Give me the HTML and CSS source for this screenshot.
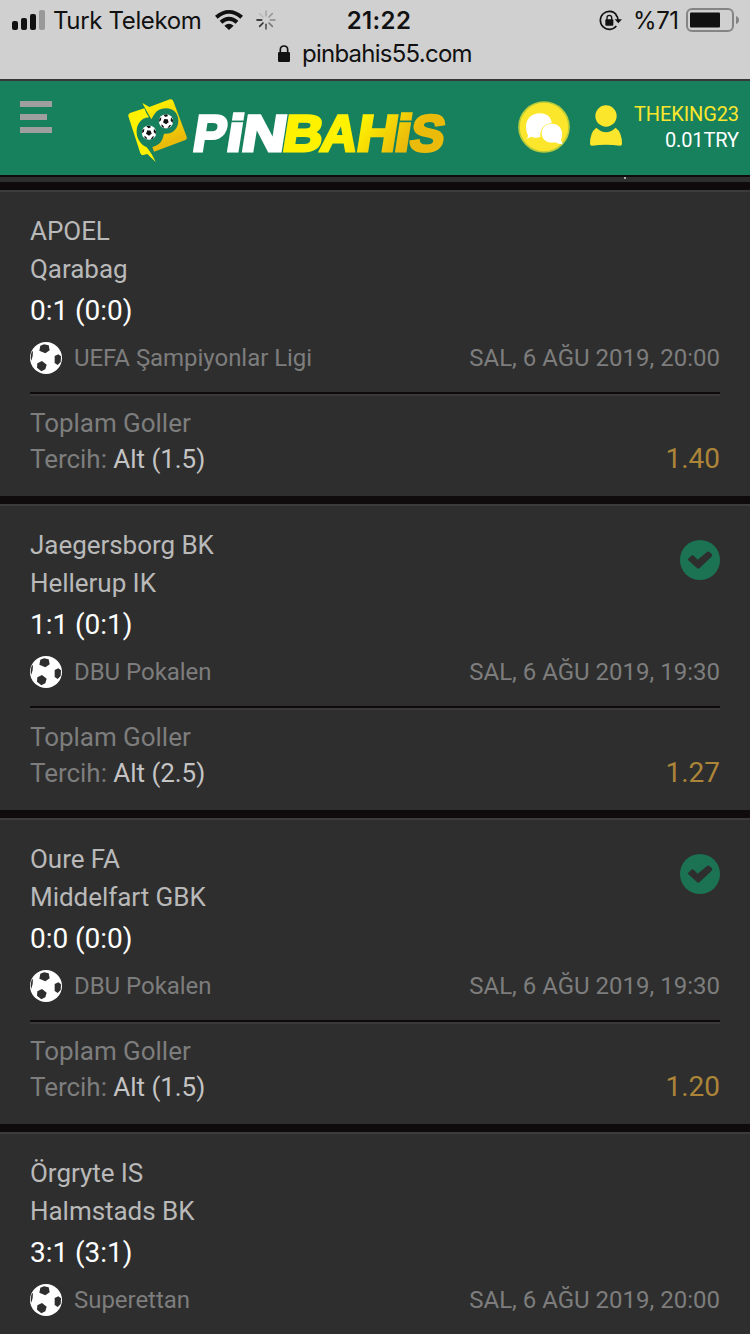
FILE: index.html
```html
<!DOCTYPE html>
<html lang="tr">
<head>
<meta charset="utf-8">
<title>Pinbahis</title>
<link rel="stylesheet" href="styles.css">
</head>
<body>
<svg width="0" height="0" class="defs">
  <defs>
    <symbol id="ball" viewBox="0 0 96 96">
      <circle cx="48" cy="48" r="48" fill="#fff"/>
      <path fill="#2e2e2e" d="M31 11 42 7 56 10 59 25 46 34 28 26ZM74 42 85 37 93 43 92 60 83 69 74 63ZM22 64 36 57 50 68 46 82 34 88 21 77ZM4 32 9 26 8 42 4 56 2 48Z"/>
    </symbol>
    <symbol id="check" viewBox="0 0 120 120">
      <circle cx="60" cy="60" r="60" fill="#1b7353"/>
      <path fill="#2e2e2e" d="M24 57 34 47Q38 44 42 48L53 59 81 36Q85 33 89 37L96 43Q98 47 94 51L60 83Q55 88 50 83L25 61Q22 59 24 57Z"/>
    </symbol>
    <symbol id="logoball" viewBox="0 0 44 44">
      <circle cx="22" cy="22" r="21.5" fill="#fff"/>
      <path fill="#111" d="M17 15 27 16 30 25 22 31 13 25ZM14 2 25 1 28 6 20 9ZM37 10 43 18 42 27 36 20ZM32 34 38 32 33 40 26 43ZM8 31 14 35 17 42 9 38ZM2 14 8 10 7 19 1 24Z"/>
    </symbol>
    <linearGradient id="gold" gradientUnits="userSpaceOnUse" x1="715" y1="-100" x2="850" y2="-20">
      <stop offset="0" stop-color="#fff200"/><stop offset="1" stop-color="#ebbb0b"/>
    </linearGradient>
    <linearGradient id="gold2" gradientUnits="userSpaceOnUse" x1="110" y1="30" x2="160" y2="150">
      <stop offset="0" stop-color="#fff200"/><stop offset="1" stop-color="#ebbb0b"/>
    </linearGradient>
  </defs>
</svg>

<div class="browser">
  <div class="status">
    <div class="carrier">
      <svg class="signal" width="34" height="20" viewBox="0 0 34 20"><rect y="11" width="6" height="9" rx="2"/><rect x="9" y="8" width="6" height="12" rx="2"/><rect x="18" y="4" width="6" height="16" rx="2"/><rect x="27" width="6" height="20" rx="2" fill="#999"/></svg>
      <span class="carrier-name">Turk Telekom</span>
      <svg class="wifi" width="28" height="20" viewBox="0 0 84 60"><path d="M0 17Q42-17 84 17L76 26Q42-4 8 26ZM14 32Q42 8 70 32L62 41Q42 23 22 41ZM28 47Q42 35 56 47L42 60Z"/></svg>
      <svg class="spinner" width="20" height="20" viewBox="0 0 60 60" stroke-width="5" stroke-linecap="round"><path d="M30 3V17" stroke="#aaa"/><path d="M49 11 39 21" stroke="#999"/><path d="M57 30H43" stroke="#888"/><path d="M49 49 39 39" stroke="#777"/><path d="M30 57V43" stroke="#555"/><path d="M11 49 21 39" stroke="#333"/><path d="M3 30H17" stroke="#111"/><path d="M11 11 21 21" stroke="#bbb"/></svg>
    </div>
    <div class="time">21:22</div>
    <div class="power">
      <svg width="23" height="21" viewBox="0 0 69 63"><path d="M52 14A27 27 0 1 0 52 48M57 31A27 27 0 0 0 50 13" fill="none" stroke="#111" stroke-width="5"/><path d="M47 28H69L58 40Z"/><rect x="19" y="28" width="24" height="19" rx="3"/><path d="M24 30V23Q24 16 31 16T38 23V30" fill="none" stroke="#111" stroke-width="4"/></svg>
      <span class="percent">%71</span>
      <svg class="battery" width="53" height="24" viewBox="0 0 53 24"><rect x="1" y="1" width="46" height="22" rx="5" fill="none" stroke="#848484" stroke-width="2"/><rect x="4" y="4.5" width="30" height="15" rx="1"/><path d="M50 8Q53 9 53 12T50 16Z" fill="#848484"/></svg>
    </div>
  </div>
  <div class="address">
    <svg width="12" height="17" viewBox="0 0 36 51"><rect y="21" width="36" height="30" rx="4"/><path d="M7 24V14Q7 3 18 3T29 14V24" fill="none" stroke="#111" stroke-width="5"/></svg>
    <span>pinbahis55.com</span>
  </div>
</div>

<header class="header">
  <div class="menu"><i></i><i></i><i></i></div>
  <svg class="logo" width="340" height="80" viewBox="0 0 1020 240">
    <path fill="#fff200" d="M30 69 73 55Q77 68 87 82C61 84 48 105 50 130C52 150 65 166 80 172Q94 188 107 216L82 192 70 195Q64 197 61 190L25 79Q24 72 30 69Z"/>
    <path fill="url(#gold2)" d="M67 39 88 51 150 28Q157 26 160 34L200 140Q202 148 194 151L102 185 97 171Q120 166 127 148 131 137 132 131C158 134 176 115 175 91C174 68 158 55 138 55Q112 55 101 76L94 88Q80 64 67 39Z"/>
    <use href="#logoball" x="65" y="106" width="44" height="44"/>
    <use href="#logoball" x="116" y="72" width="44" height="44"/>
    <g class="wordmark" transform="translate(0 183) skewX(-9)">
      <g fill="#fff" stroke="#fff"><text x="214" y="0" textLength="98" lengthAdjust="spacingAndGlyphs">P</text><text x="314" y="0" textLength="49" lengthAdjust="spacingAndGlyphs">i</text><text x="359" y="0" textLength="133" lengthAdjust="spacingAndGlyphs">N</text></g>
      <g fill="url(#gold)" stroke="url(#gold)"><text x="483" y="0" textLength="119" lengthAdjust="spacingAndGlyphs">B</text><text x="597" y="0" textLength="108" lengthAdjust="spacingAndGlyphs">A</text><text x="705" y="0" textLength="120" lengthAdjust="spacingAndGlyphs">H</text><text x="818" y="0" textLength="49" lengthAdjust="spacingAndGlyphs">i</text><text x="864" y="0" textLength="103" lengthAdjust="spacingAndGlyphs">S</text></g>
    </g>
  </svg>
  <svg class="chat" width="52" height="52" viewBox="0 0 156 156"><circle cx="78" cy="78" r="75" fill="#fbe62c" stroke="#b9cb3a" stroke-width="5"/><path fill="#fff" d="M31 105Q24 94 24 75C25 52 42 37 65 37S100 50 101 66C79 68 65 83 67 108Q50 113 41 107L25 113Z"/><path fill="#fff" d="M129 117Q134 106 132 94C130 77 117 68 101 68C83 68 71 80 71 96C71 117 89 128 111 124Q122 130 134 130Z"/></svg>
  <svg class="user" width="32" height="41" viewBox="0 0 96 123"><circle cx="48" cy="33" r="32"/><path d="M19 68Q48 95 77 68Q96 82 96 116Q96 122 90 122Q48 116 6 122Q0 122 0 116Q0 82 19 68Z"/></svg>
  <div class="account"><div class="name">THEKING23</div><div>0.01TRY</div></div>
</header>

<main class="bets">
  <div class="previous"><i></i></div>
  <section class="card">
    <div class="team">APOEL</div><div class="team">Qarabag</div><div class="score">0:1 (0:0)</div>
    <div class="meta"><svg class="ball"><use href="#ball"/></svg><span>UEFA Şampiyonlar Ligi</span><time>SAL, 6 AĞU 2019, 20:00</time></div>
    <div class="market">Toplam Goller</div>
    <div class="pick"><span>Tercih: <b>Alt (1.5)</b></span><span class="odds">1.40</span></div>
  </section>
  <section class="card">
    <svg class="won"><use href="#check"/></svg>
    <div class="team">Jaegersborg BK</div><div class="team">Hellerup IK</div><div class="score">1:1 (0:1)</div>
    <div class="meta"><svg class="ball"><use href="#ball"/></svg><span>DBU Pokalen</span><time>SAL, 6 AĞU 2019, 19:30</time></div>
    <div class="market">Toplam Goller</div>
    <div class="pick"><span>Tercih: <b>Alt (2.5)</b></span><span class="odds">1.27</span></div>
  </section>
  <section class="card">
    <svg class="won"><use href="#check"/></svg>
    <div class="team">Oure FA</div><div class="team">Middelfart GBK</div><div class="score">0:0 (0:0)</div>
    <div class="meta"><svg class="ball"><use href="#ball"/></svg><span>DBU Pokalen</span><time>SAL, 6 AĞU 2019, 19:30</time></div>
    <div class="market">Toplam Goller</div>
    <div class="pick"><span>Tercih: <b>Alt (1.5)</b></span><span class="odds">1.20</span></div>
  </section>
  <section class="card card-last">
    <div class="team">Örgryte IS</div><div class="team">Halmstads BK</div><div class="score">3:1 (3:1)</div>
    <div class="meta"><svg class="ball"><use href="#ball"/></svg><span>Superettan</span><time>SAL, 6 AĞU 2019, 20:00</time></div>
  </section>
</main>
</body>
</html>
```
FILE: styles.css
```css
* { box-sizing: border-box; }
body {
  margin: 0;
  width: 750px;
  height: 1334px;
  overflow: hidden;
  display: flex;
  flex-direction: column;
  background: #0f0b0c;
  font-family: Roboto, sans-serif;
}
svg { display: block; flex: none; }
.defs { position: absolute; }

.browser {
  height: 81px;
  flex: none;
  background: #d0d0d0;
  border-bottom: 2px solid #383838;
  color: #111;
  fill: #111;
  font-family: Inter, sans-serif;
  font-size: 24px;
}
.status {
  display: grid;
  grid-template-columns: 300px 158px 1fr;
  align-items: center;
  height: 40px;
}
.carrier, .power { display: flex; align-items: center; }
.carrier { padding-left: 12px; }
.carrier-name { width: 148px; margin-left: 7px; white-space: nowrap; letter-spacing: -0.35px; }
.wifi { margin-left: 14px; }
.spinner { margin-left: 13px; }
.time { text-align: center; font-weight: 600; letter-spacing: 0.4px; }
.power { padding-left: 141px; }
.percent { margin-left: 11px; width: 47px; letter-spacing: -0.4px; white-space: nowrap; }
.battery { margin-left: 6px; }
.address {
  display: flex;
  align-items: center;
  height: 27px;
  padding-left: 278px;
  gap: 12px;
  letter-spacing: -0.75px;
}

.header {
  display: flex;
  height: 94px;
  flex: none;
  padding: 9px 11px 0 20px;
  background: #17815e;
}
.menu { display: flex; flex-direction: column; gap: 7px; width: 32px; padding-top: 11px; }
.menu i { height: 6px; background: #9f9f9f; }
.menu i:nth-child(2) { width: 27px; }
.logo { margin-left: 68px; }
.wordmark { font: bold 154px "Liberation Sans", Arial, sans-serif; stroke-width: 9; }
.chat { margin: 11px 0 0 58px; }
.user { margin: 15px 0 0 20px; fill: #fbe62c; }
.account { flex: 1; padding-top: 11px; text-align: right; font-size: 20px; line-height: 26px; letter-spacing: -0.1px; color: #fff; }
.name { color: #fbe62c; }

.bets { display: flex; flex-direction: column; gap: 8px; padding-top: 2px; }
.previous { height: 5px; flex: none; background: #2e2e2e; padding-left: 624px; }
.previous i { display: block; width: 2px; height: 2px; background: #aaa; }
.card {
  position: relative;
  height: 306px;
  flex: none;
  padding: 20px 30px 0;
  border-top: 2px solid #3c3c3c;
  background: #2e2e2e;
  letter-spacing: -0.04px;
}
.card-last { height: 202px; }
.won { position: absolute; top: 34px; right: 30px; width: 40px; height: 40px; }
.team { font-size: 26px; line-height: 38px; color: #b9b9b9; }
.score { font-size: 28px; line-height: 45px; color: #fff; }
.meta {
  display: flex;
  align-items: center;
  height: 32px;
  margin-top: 9px;
  font-size: 24px;
  color: #7d7d7d;
}
.ball { width: 32px; height: 32px; margin-right: 12px; }
.meta time { margin-left: auto; letter-spacing: 0; }
.market {
  margin-top: 18px;
  padding-top: 11px;
  border-top: 2px solid #0f0b0c;
  box-shadow: inset 0 2px #3a3a3a;
  font-size: 26px;
  line-height: 36px;
  color: #7d7d7d;
}
.pick {
  display: flex;
  justify-content: space-between;
  font-size: 26px;
  line-height: 36px;
  color: #7d7d7d;
}
.pick b { font-weight: 400; color: #c4c4c4; }
.odds { font-size: 28px; color: #ac8538; }
```
